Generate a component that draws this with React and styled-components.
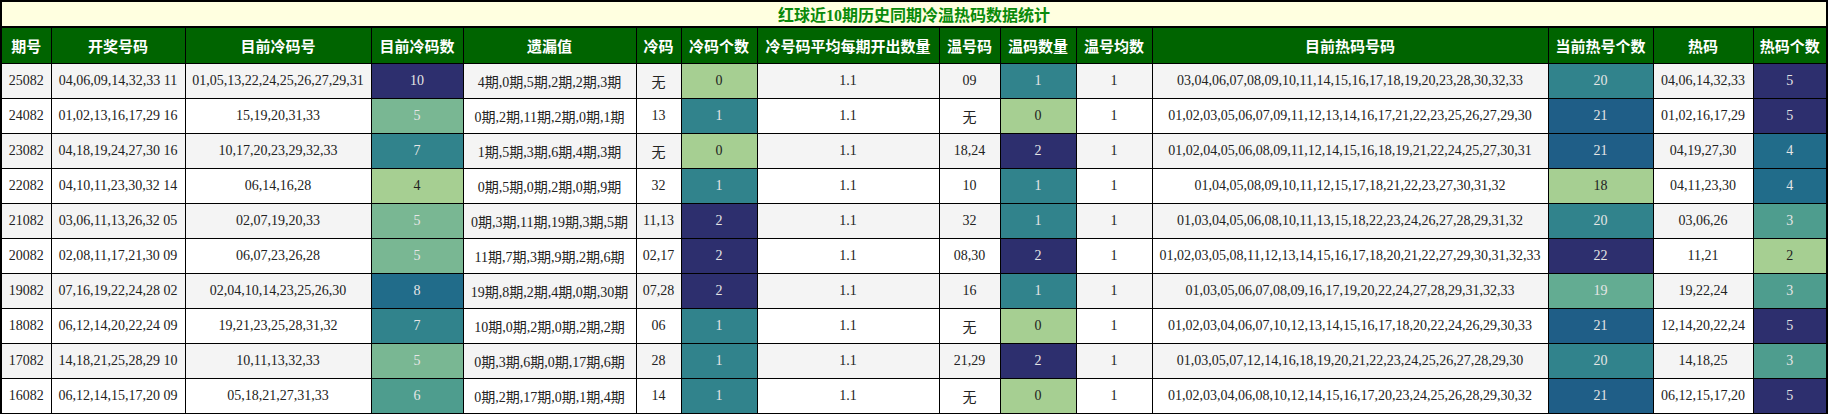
import React from "react";
import styled, { createGlobalStyle } from "styled-components";

const COLORS = {
  navy: "#2d2f6e",
  blue: "#1f5e87",
  blue2: "#216c8a",
  teal: "#31838c",
  sea: "#4e9d8e",
  mint: "#63ac92",
  green: "#79b793",
  lime: "#a6cf92",
};

const COLUMNS = [
  { title: "期号", width: 50 },
  { title: "开奖号码", width: 134 },
  { title: "目前冷码号", width: 186 },
  { title: "目前冷码数", width: 92 },
  { title: "遗漏值", width: 173 },
  { title: "冷码", width: 45 },
  { title: "冷码个数", width: 76 },
  { title: "冷号码平均每期开出数量", width: 182 },
  { title: "温号码", width: 61 },
  { title: "温码数量", width: 76 },
  { title: "温号均数", width: 76 },
  { title: "目前热码号码", width: 396 },
  { title: "当前热号个数", width: 105 },
  { title: "热码", width: 100 },
  { title: "热码个数", width: 74 },
];

// [issue, draw, coldNums, coldCount, omit, cold, coldN, avg, warm, warmN, warmAvg, hotNums, hotCount, hot, hotN]
const rows = [
  ["25082", "04,06,09,14,32,33 11", "01,05,13,22,24,25,26,27,29,31", [10, "navy"], "4期,0期,5期,2期,2期,3期", "无", [0, "lime"], "1.1", "09", [1, "teal"], "1", "03,04,06,07,08,09,10,11,14,15,16,17,18,19,20,23,28,30,32,33", [20, "teal"], "04,06,14,32,33", [5, "navy"]],
  ["24082", "01,02,13,16,17,29 16", "15,19,20,31,33", [5, "green"], "0期,2期,11期,2期,0期,1期", "13", [1, "teal"], "1.1", "无", [0, "lime"], "1", "01,02,03,05,06,07,09,11,12,13,14,16,17,21,22,23,25,26,27,29,30", [21, "blue"], "01,02,16,17,29", [5, "navy"]],
  ["23082", "04,18,19,24,27,30 16", "10,17,20,23,29,32,33", [7, "teal"], "1期,5期,3期,6期,4期,3期", "无", [0, "lime"], "1.1", "18,24", [2, "navy"], "1", "01,02,04,05,06,08,09,11,12,14,15,16,18,19,21,22,24,25,27,30,31", [21, "blue"], "04,19,27,30", [4, "blue2"]],
  ["22082", "04,10,11,23,30,32 14", "06,14,16,28", [4, "lime"], "0期,5期,0期,2期,0期,9期", "32", [1, "teal"], "1.1", "10", [1, "teal"], "1", "01,04,05,08,09,10,11,12,15,17,18,21,22,23,27,30,31,32", [18, "lime"], "04,11,23,30", [4, "blue2"]],
  ["21082", "03,06,11,13,26,32 05", "02,07,19,20,33", [5, "green"], "0期,3期,11期,19期,3期,5期", "11,13", [2, "navy"], "1.1", "32", [1, "teal"], "1", "01,03,04,05,06,08,10,11,13,15,18,22,23,24,26,27,28,29,31,32", [20, "teal"], "03,06,26", [3, "sea"]],
  ["20082", "02,08,11,17,21,30 09", "06,07,23,26,28", [5, "green"], "11期,7期,3期,9期,2期,6期", "02,17", [2, "navy"], "1.1", "08,30", [2, "navy"], "1", "01,02,03,05,08,11,12,13,14,15,16,17,18,20,21,22,27,29,30,31,32,33", [22, "navy"], "11,21", [2, "lime"]],
  ["19082", "07,16,19,22,24,28 02", "02,04,10,14,23,25,26,30", [8, "blue2"], "19期,8期,2期,4期,0期,30期", "07,28", [2, "navy"], "1.1", "16", [1, "teal"], "1", "01,03,05,06,07,08,09,16,17,19,20,22,24,27,28,29,31,32,33", [19, "mint"], "19,22,24", [3, "sea"]],
  ["18082", "06,12,14,20,22,24 09", "19,21,23,25,28,31,32", [7, "teal"], "10期,0期,2期,0期,2期,2期", "06", [1, "teal"], "1.1", "无", [0, "lime"], "1", "01,02,03,04,06,07,10,12,13,14,15,16,17,18,20,22,24,26,29,30,33", [21, "blue"], "12,14,20,22,24", [5, "navy"]],
  ["17082", "14,18,21,25,28,29 10", "10,11,13,32,33", [5, "green"], "0期,3期,6期,0期,17期,6期", "28", [1, "teal"], "1.1", "21,29", [2, "navy"], "1", "01,03,05,07,12,14,16,18,19,20,21,22,23,24,25,26,27,28,29,30", [20, "teal"], "14,18,25", [3, "sea"]],
  ["16082", "06,12,14,15,17,20 09", "05,18,21,27,31,33", [6, "sea"], "0期,2期,17期,0期,1期,4期", "14", [1, "teal"], "1.1", "无", [0, "lime"], "1", "01,02,03,04,06,08,10,12,14,15,16,17,20,23,24,25,26,28,29,30,32", [21, "blue"], "06,12,15,17,20", [5, "navy"]],
];

const GlobalStyle = createGlobalStyle`
  body {
    margin: 0;
    background: #fff;
    font-family: "Liberation Serif", "Noto Sans CJK SC", serif;
  }
`;

const Table = styled.table`
  width: 1828px;
  table-layout: fixed;
  border-collapse: collapse;
  border: 2px solid #000;
`;

const TitleCell = styled.th`
  height: 23px;
  padding: 0;
  background: #ffffe0;
  border-bottom: 2px solid #000;
  color: #0a8a0a;
  font-size: 16px;
  font-weight: bold;
  text-align: center;
`;

const HeadCell = styled.th`
  height: 35px;
  padding: 0;
  background: #006400;
  color: #fff;
  border: 1px solid #000;
  font-family: "Noto Sans CJK SC", sans-serif;
  font-size: 15px;
  font-weight: bold;
  text-align: center;
  white-space: nowrap;
`;

const Row = styled.tr`
  background: ${(p) => (p.$odd ? "#f4f4f4" : "#fff")};
`;

const Cell = styled.td`
  height: 34px;
  padding: 0;
  border: 1px solid #000;
  color: #222;
  font-size: 14px;
  text-align: center;
  white-space: nowrap;
`;

const ColorCell = styled(Cell)`
  background: ${(p) => COLORS[p.$tone]};
  color: ${(p) => (p.$tone === "lime" ? "#222" : "#e6e6e6")};
`;

const App = () => (
  <>
    <GlobalStyle />
    <Table>
      <colgroup>
        {COLUMNS.map((c) => (
          <col key={c.title} style={{ width: c.width }} />
        ))}
      </colgroup>
      <thead>
        <tr>
          <TitleCell colSpan={COLUMNS.length}>红球近10期历史同期冷温热码数据统计</TitleCell>
        </tr>
        <tr>
          {COLUMNS.map((c) => (
            <HeadCell key={c.title}>{c.title}</HeadCell>
          ))}
        </tr>
      </thead>
      <tbody>
        {rows.map((r, i) => (
          <Row key={r[0]} $odd={i % 2 === 0}>
            {r.map((v, j) =>
              Array.isArray(v) ? (
                <ColorCell key={j} $tone={v[1]}>
                  {v[0]}
                </ColorCell>
              ) : (
                <Cell key={j}>{v}</Cell>
              )
            )}
          </Row>
        ))}
      </tbody>
    </Table>
  </>
);

export default App;
